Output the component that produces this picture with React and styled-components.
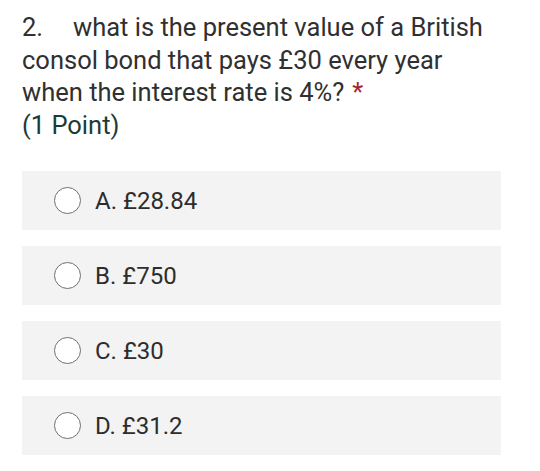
import React from "react";
import styled, { createGlobalStyle } from "styled-components";

const Global = createGlobalStyle`
  html, body { margin: 0; padding: 0; background: #fff; }
  body { font-family: Roboto, "Noto Sans", Arial, sans-serif; color: #2b2b2b; }
`;

const Page = styled.div`
  padding: 11px 39px 0 22px;
`;

const Question = styled.div`
  max-width: 470px;
  font-size: 25.5px;
  line-height: 32.5px;
  color: #303030;
`;

const Num = styled.span`
  display: inline-block;
  width: 51px;
`;

const Star = styled.span`
  color: #a4262c;
  margin-left: 8px;
`;

const Points = styled.div`
  color: #1d3b36;
`;

const Options = styled.div`
  margin-top: 30px;
  display: flex;
  flex-direction: column;
  gap: 16px;
`;

const Option = styled.label`
  display: flex;
  align-items: center;
  height: 59px;
  background: #f3f3f3;
  padding-left: 32px;
  gap: 14px;
  font-size: 24px;
  color: #2d2d2d;
`;

const Radio = styled.span`
  box-sizing: border-box;
  width: 27px;
  height: 27px;
  border-radius: 50%;
  border: 1.6px solid #707070;
  background: #fff;
  flex: none;
`;

const options = ["A. £28.84", "B. £750", "C. £30", "D. £31.2"];

export default function App() {
  return (
    <Page>
      <Global />
      <Question>
        <Num>2.</Num>what is the present value of a British consol bond that pays £30 every year when the interest rate is 4%?<Star>*</Star>
        <Points>(1 Point)</Points>
      </Question>
      <Options>
        {options.map((o) => (
          <Option key={o}>
            <Radio />
            <span>{o}</span>
          </Option>
        ))}
      </Options>
    </Page>
  );
}
